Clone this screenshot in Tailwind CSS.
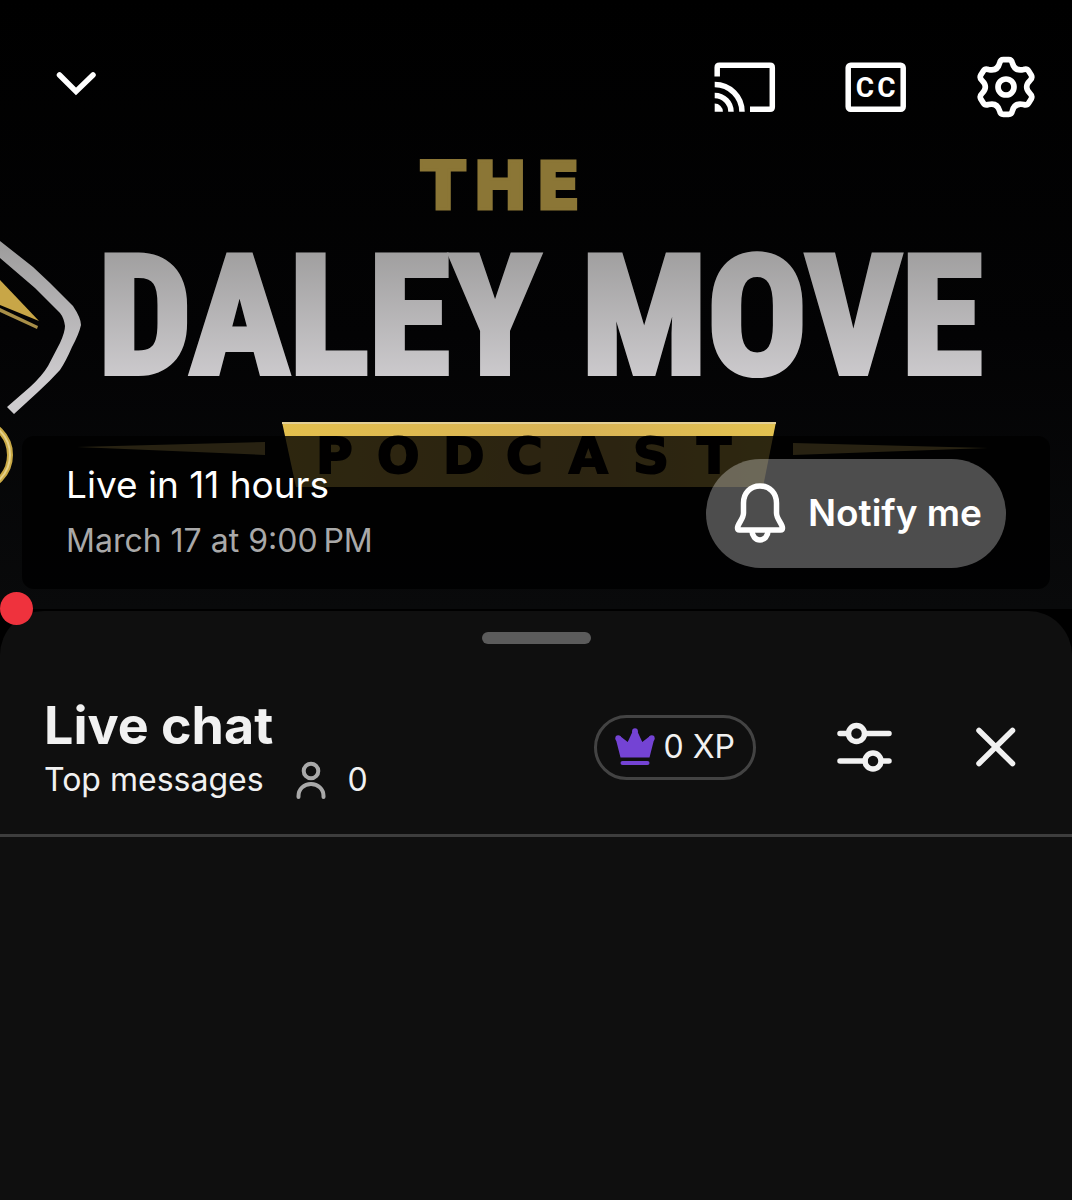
<!DOCTYPE html>
<html lang="en">
<head>
    <meta charset="UTF-8">
    <meta name="viewport" content="width=device-width, initial-scale=1.0">
    <title>The Daley Move Podcast - Live chat</title>
    <script src="https://cdn.jsdelivr.net/npm/@tailwindcss/browser@4"></script>
</head>
<body class="min-h-screen flex flex-col bg-black font-['Inter',sans-serif] text-[#f1f1f1]">

    <!-- Player -->
    <div class="relative">
        <svg viewBox="0 0 1072 611" class="block w-full" role="img" aria-label="The Daley Move Podcast">
            <defs>
                <linearGradient id="backdrop" x1="0" y1="0" x2="0" y2="1">
                    <stop offset="0" stop-color="#000000"/>
                    <stop offset="0.55" stop-color="#030304"/>
                    <stop offset="1" stop-color="#090a0b"/>
                </linearGradient>
                <linearGradient id="silver" gradientUnits="userSpaceOnUse" x1="0" y1="240" x2="0" y2="380">
                    <stop offset="0" stop-color="#9c9b9b"/>
                    <stop offset="1" stop-color="#cdcbce"/>
                </linearGradient>
                <linearGradient id="gold" x1="0" y1="0" x2="1" y2="0">
                    <stop offset="0" stop-color="#e3bf4d"/>
                    <stop offset="0.6" stop-color="#d8b356"/>
                    <stop offset="1" stop-color="#e3c250"/>
                </linearGradient>
            </defs>
            <rect width="1072" height="609" fill="url(#backdrop)"/>

            <path d="M0 241L33 267L50 283L73 306Q81 318 81 325Q79 334 72 347Q66 361 60 370Q50 381 38 392L14 414L7 407L30 387Q42 376 48 366L60 343Q65 332 65 326Q64 318 60 313L35 288L0 258Z" fill="url(#silver)"/>
            <path d="M0 280L39 321L0 305Z" fill="#c8a647"/>
            <path d="M0 308L38 326L37 329L0 312Z" fill="#a88f48"/>
            <circle cx="-24" cy="455" r="34" fill="none" stroke="#c9a945" stroke-width="6"/>
            <circle cx="-24" cy="455" r="34" fill="none" stroke="#e6d18a" stroke-width="2"/>

            <text x="421 473 536" y="209" font-family="DejaVu Sans" font-weight="700" font-size="65" fill="#8b7636" stroke="#8b7636" stroke-width="3">THE</text>
            <g font-family="Roboto Condensed, Roboto, sans-serif" font-weight="700" font-size="166" text-anchor="middle" fill="url(#silver)" stroke="url(#silver)" stroke-width="6">
                <text x="319" y="373">DALEY</text>
                <text x="782" y="373">MOVE</text>
            </g>

            <path d="M282 422H776L763 487H296Z" fill="url(#gold)"/>
            <path d="M282 423H776" stroke="#e3cf95" stroke-width="2"/>
            <text x="316 377 443 506 569 633 697" y="473" font-family="DejaVu Sans" font-weight="700" font-size="50" fill="#050302" stroke="#050302" stroke-width="2">PODCAST</text>
            <path d="M77 447L265 442V455Z" fill="#c5ac5c"/>
            <path d="M988 448L793 443V455Z" fill="#c5ac5c"/>
        </svg>

        <div class="absolute inset-x-0 top-[55px] flex items-start justify-between pl-11 pr-[34px] text-white">
            <button type="button" aria-label="Minimize">
                <svg viewBox="0 0 64 56" class="w-16 h-14" fill="none" stroke="currentColor" stroke-width="5.500" stroke-linecap="round">
                    <path d="M15.500 20L32 36.500L49 20"/>
                </svg>
            </button>
            <div class="flex gap-[66px]">
                <button type="button" aria-label="Cast">
                    <svg viewBox="1 0 64 64" class="size-16" fill="none" stroke="currentColor" stroke-width="5.500">
                        <path d="M4.200 21.500V12.500Q4.200 10.200 6.500 10.200H57Q59.300 10.200 59.300 12.500V52Q59.300 54.300 57 54.300H37"/>
                        <path d="M1.700 29.500A27.300 27.300 0 0 1 29 56.800M1.700 40.500A16.300 16.300 0 0 1 18 56.800"/>
                        <path d="M1.700 48.600A8.200 8.200 0 0 1 9.900 56.800H1.700Z" fill="currentColor" stroke="none"/>
                    </svg>
                </button>
                <button type="button" aria-label="Captions">
                    <svg viewBox="0 0 64 64" class="size-16">
                        <rect x="4.200" y="10.200" width="55" height="44" rx="2.500" fill="none" stroke="currentColor" stroke-width="5.500"/>
                        <text x="21 42.500" y="42" text-anchor="middle" font-family="Roboto" font-weight="700" font-size="28" fill="currentColor">CC</text>
                    </svg>
                </button>
                <button type="button" aria-label="Settings">
                    <svg viewBox="-96 -96 192 192" class="size-16" fill="none" stroke="currentColor" stroke-width="17" stroke-linejoin="round">
                        <path d="M-19 -72Q-17 -82 -8 -82H8Q17 -82 19 -72Q26 -46 53 -52.500Q63 -56 68 -48L76 -35Q80 -27 72 -19.500Q52 0 72 19.500Q80 27 76 35L68 48Q63 56 53 52.500Q26 46 19 72Q17 82 8 82H-8Q-17 82 -19 72Q-26 46 -53 52.500Q-63 56 -68 48L-76 35Q-80 27 -72 19.500Q-52 0 -72 -19.500Q-80 -27 -76 -35L-68 -48Q-63 -56 -53 -52.500Q-26 -46 -19 -72Z"/>
                        <circle r="24"/>
                    </svg>
                </button>
            </div>
        </div>

        <!-- Upcoming stream -->
        <div class="absolute inset-x-[22px] bottom-[22px] flex items-center justify-between rounded-xl bg-black/80 pt-[21px] pb-5 pl-11 pr-11">
            <div>
                <p class="text-[37px] leading-[56px] text-white">Live in 11 hours</p>
                <p class="text-[32px] leading-[56px] text-[#a9a9a9]">March 17 at 9:00&#8201;PM</p>
            </div>
            <button type="button" class="flex h-[109px] items-center gap-[18px] rounded-full bg-white/30 px-6 text-[37px] font-semibold text-white">
                <svg viewBox="0 0 60 64" class="w-[60px] h-16" fill="none" stroke="currentColor" stroke-width="5.500" stroke-linejoin="round">
                    <path d="M30 5C20 5 13.500 12.500 13.500 22V32C13.500 38 7.500 43 7.500 47Q7.500 49 9.500 49H50.500Q52.500 49 52.500 47C52.500 43 46.500 38 46.500 32V22C46.500 12.500 40 5 30 5Z"/>
                    <path d="M22 50A8 9 0 0 0 38 50"/>
                </svg>
                Notify me
            </button>
        </div>

        <span class="absolute left-0 -bottom-[14px] z-10 size-[33px] rounded-full bg-[#ef323d]"></span>
    </div>

    <!-- Live chat panel -->
    <div class="grow rounded-t-[44px] bg-[#0f0f0f] pt-[21px]">
        <div class="mx-auto h-3 w-[109px] rounded-full bg-[#5b5b5b]"></div>

        <div class="mt-[52px] flex items-start justify-between border-b-[3px] border-[#3d3d3d] px-11 pb-[30px]">
            <div>
                <h1 class="text-[52px] leading-[60px] font-bold">Live chat</h1>
                <div class="flex items-center text-[32px] leading-[48px]">
                    <span>Top messages</span>
                    <svg viewBox="0 0 32 40" class="ml-8 h-10 w-8 text-[#a9a9a9]" fill="none" stroke="currentColor" stroke-width="4">
                        <circle cx="15" cy="11" r="7.300"/>
                        <path d="M2.500 37V36C2.500 29 8 24 15 24S27.500 29 27.500 36V37" stroke-linecap="round"/>
                    </svg>
                    <span class="ml-5">0</span>
                </div>
            </div>
            <div class="flex h-[102px] items-center gap-[68px]">
                <button type="button" class="mr-2 flex h-[65px] items-center gap-[9px] rounded-full border-[3px] border-[#434343] px-[18px] text-[32px]">
                    <svg viewBox="0 0 40 40" class="size-10" fill="#7443d4">
                        <path d="M5.500 30.500L0.800 12L5 9L12.700 15L17.600 4.500H22.400L27.300 15L35 9L39.200 12L34.500 30.500Z"/>
                        <circle cx="20" cy="4.200" r="2.900"/>
                        <circle cx="3.200" cy="11.200" r="2.900"/>
                        <circle cx="36.800" cy="11.200" r="2.900"/>
                        <rect x="5.500" y="34" width="29" height="4" rx="2"/>
                    </svg>
                    0 XP
                </button>
                <button type="button" aria-label="Chat settings">
                    <svg viewBox="0 0 64 64" class="size-16" fill="none" stroke="currentColor" stroke-width="5.500" stroke-linecap="round">
                        <path d="M8 18.500H15M34 18.500H57M8 46H33M50 46H57"/>
                        <circle cx="24.500" cy="18.500" r="8"/>
                        <circle cx="41" cy="46" r="8"/>
                    </svg>
                </button>
                <button type="button" aria-label="Close">
                    <svg viewBox="0 0 64 64" class="size-16" fill="none" stroke="currentColor" stroke-width="5.500" stroke-linecap="round">
                        <path d="M15 15.500L48.500 48.500M48.500 15.500L15 48.500"/>
                    </svg>
                </button>
            </div>
        </div>
    </div>

</body>
</html>
